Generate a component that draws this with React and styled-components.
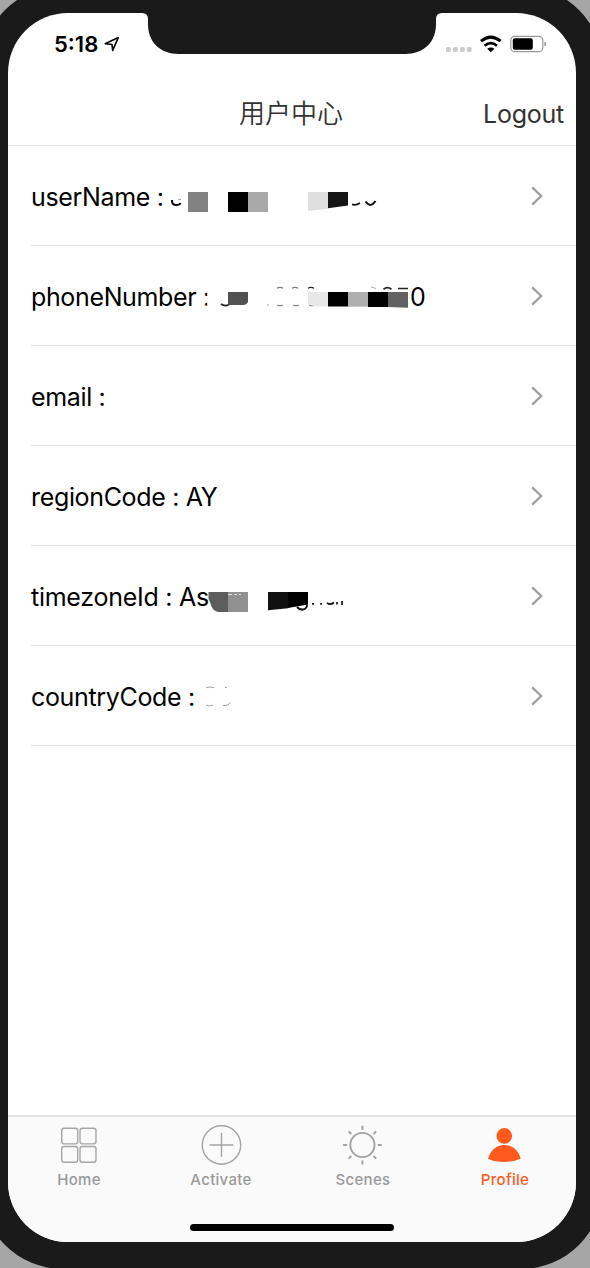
import React from 'react';
import styled, { createGlobalStyle } from 'styled-components';

const GlobalStyle = createGlobalStyle`
  * { box-sizing: border-box; }
  body { margin: 0; overflow: hidden; font-family: Inter, "Noto Sans CJK SC", sans-serif; }
  svg { display: block; }
`;

const Desktop = styled.div`
  width: 590px;
  height: 1268px;
  overflow: hidden;
  background: #a6a6a6;
`;

const Phone = styled.div`
  width: 622px;
  height: 1283px;
  margin: -14px 0 0 -19px;
  padding: 27px;
  border-radius: 82px;
  background: #1a1a1a;
`;

const Screen = styled.main`
  position: relative;
  width: 568px;
  height: 1229px;
  display: flex;
  flex-direction: column;
  overflow: hidden;
  border-radius: 60px;
  background: #fff;
`;

const Notch = styled.svg`
  position: absolute;
  top: 0;
  left: 132px;
`;

const StatusBar = styled.div`
  height: 67px;
  padding: 19px 29px 0 46px;
  display: flex;
  align-items: flex-start;
  justify-content: space-between;
`;

const Clock = styled.div`
  display: flex;
  align-items: center;
  gap: 6px;
  height: 24px;
  font-size: 22px;
  line-height: 24px;
  font-weight: 600;
  color: #000;
`;

const Header = styled.header`
  height: 66px;
  padding: 2px 12px 0;
  display: grid;
  grid-template-columns: 1fr auto 1fr;
  align-items: center;
  border-bottom: 1px solid #e8e8e8;
  color: #333;
`;

const Title = styled.h1`
  grid-column: 2;
  margin: -3px 0 0 -2px;
  font-size: 26px;
  line-height: 36px;
  font-weight: 350;
  font-family: "Noto Sans CJK SC DemiLight", "Noto Sans CJK SC", sans-serif;
`;

const Logout = styled.button`
  justify-self: end;
  padding: 0;
  border: 0;
  background: none;
  font: 400 25px/36px Inter, sans-serif;
  letter-spacing: -0.25px;
  color: #333;
`;

const List = styled.ul`
  flex: 1;
  margin: 0;
  padding: 0 0 0 23px;
  list-style: none;
`;

const Row = styled.li`
  position: relative;
  height: 100px;
  padding: 2px 32px 0 0;
  display: flex;
  align-items: center;
  justify-content: space-between;
  border-bottom: 1px solid #e2e2e2;
`;

const RowText = styled.span`
  font-size: 25px;
  line-height: 36px;
  letter-spacing: ${(p) => p.$tracking || '-0.34px'};
  color: #000;
  white-space: pre;
`;

const Mask = styled.svg`
  position: absolute;
  left: 0;
  top: 0;
`;

const LastDigit = styled.span`
  position: absolute;
  left: 379px;
  top: 33px;
  font-size: 25px;
  line-height: 36px;
`;

const TabBar = styled.nav`
  height: 127px;
  display: grid;
  grid-template-columns: repeat(4, 1fr);
  align-items: start;
  border-top: 2px solid #e3e3e3;
  background: #fafafa;
`;

const Tab = styled.a`
  padding-top: 8px;
  display: flex;
  flex-direction: column;
  align-items: center;
  gap: 3px;
  font-size: 15px;
  line-height: 20px;
  font-weight: 500;
  letter-spacing: 0.3px;
  color: ${(p) => (p.$active ? '#ff5a1c' : '#999')};
`;

const HomeIndicator = styled.div`
  position: absolute;
  left: 182px;
  bottom: 11px;
  width: 204px;
  height: 7px;
  border-radius: 4px;
  background: #000;
`;

const Chevron = () => (
  <svg width="14" height="22" viewBox="0 0 14 22" fill="none" stroke="#a0a0a0" strokeWidth="2.3">
    <path d="M2.2 1.4 L11.2 10 L2.2 18.6" />
  </svg>
);

const StatusIcons = () => (
  <svg width="110" height="25" viewBox="437 32 110 25">
    <g fill="#cbcbcb">
      {[446, 453, 460, 466.8].map((x) => (
        <rect key={x} x={x} y="47" width="4.8" height="5" rx="1.5" />
      ))}
    </g>
    <g fill="none" stroke="#000">
      <path d="M481 41.2 Q490.8 33 500.6 41.2" strokeWidth="3" />
      <path d="M484.6 45.8 Q490.8 40.4 497 45.8" strokeWidth="2.8" />
    </g>
    <path d="M487.2 48.8 Q490.8 46 494.4 48.8 L490.8 52.2 Z" />
    <rect x="510.8" y="36.3" width="32" height="15.4" rx="4" fill="none" stroke="#999" strokeWidth="1.2" />
    <rect x="512.8" y="38.3" width="20" height="11.4" rx="2" />
    <path d="M544.4 41.5 Q546.3 42.3 546.3 44 Q546.3 45.7 544.4 46.5 Z" fill="#999" />
  </svg>
);

const icons = {
  Home: (
    <svg width="42" height="42" viewBox="0 0 42 42" fill="none" stroke="#a6a6a6" strokeWidth="1.4">
      {[[3.7, 3.2], [22, 3.2], [3.7, 21.5], [22, 21.5]].map(([x, y]) => (
        <rect key={`${x}-${y}`} x={x} y={y} width="16" height="15.7" rx="2.3" />
      ))}
    </svg>
  ),
  Activate: (
    <svg width="42" height="42" viewBox="0 0 42 42" fill="none" stroke="#a3a3a3" strokeWidth="1.4">
      <circle cx="21.5" cy="20" r="19.2" />
      <path d="M9.5 20h24M21.5 8v24" />
    </svg>
  ),
  Scenes: (
    <svg width="42" height="42" viewBox="0 0 42 42" fill="none" stroke="#a2a2a2" strokeWidth="2" strokeLinecap="round">
      <circle cx="20.4" cy="20" r="12.1" strokeWidth="1.9" />
      <path d="M20.4 1.5v2.4M20.4 36.3v2.4M1.8 20h2.6M36.4 20h2.6M7.2 6.9l1.5 1.6M33.6 6.9l-1.5 1.6M7.2 33.1l1.5-1.6M33.6 33.1l-1.5-1.6" />
    </svg>
  ),
  Profile: (
    <svg width="42" height="42" viewBox="0 0 42 42" fill="#ff5a1c">
      <circle cx="20.3" cy="10.9" r="7.8" />
      <path d="M4 33.7 C6.4 25.1 12.5 19.9 20.3 19.9 C28.1 19.9 34.2 25.1 36.7 33.7 Q29.2 36.9 20.3 36.9 Q11.5 36.9 4 33.7 Z" />
    </svg>
  ),
};

// Mosaic blocks that cover private values; x follows the screen, y the row.
const Mosaic = ({ children }) => (
  <Mask width="545" height="99" viewBox="31 0 545 99">
    {children}
  </Mask>
);

const masks = {
  userName: (
    <Mosaic>
      <g fill="none" stroke="#111" strokeWidth="2">
        <path d="M172 54 Q171.5 58.5 175.5 59 Q179.5 59.5 180.5 57" />
        <path d="M178 53.3l3 .2" stroke="#666" strokeWidth=".6" />
        <path d="M352 58.4 Q356 59.6 360 57" strokeWidth="1.7" />
        <path d="M365.5 55.5 Q370.5 62.5 375.5 55" />
      </g>
      <rect x="188" y="46" width="20" height="20" fill="#828282" />
      <rect x="228" y="46" width="20" height="20" />
      <rect x="248" y="46" width="20" height="20" fill="#a8a8a8" />
      <path d="M308 46h20v16.8l-20 2.2z" fill="#dfdfdf" />
      <path d="M328 46h20v13.5l-20 2.8z" fill="#151515" />
    </Mosaic>
  ),
  phoneNumber: (
    <Mosaic>
      <rect x="207.2" y="36" width="5" height="28" fill="#fff" />
      <g fill="none" stroke="#222" strokeWidth="1.2">
        <path d="M221 58q4 3 8 .5" strokeWidth="1.8" />
        <path d="M277 42.2q3-1.6 6 0M292 42.2q3-1.6 6 0" stroke="#777" />
        <path d="M308 42.2q3-1.6 6 0" />
        <path d="M277 59.2q3 1 6 0M293 59.2q3 1 6 0M309 59.2q3 1 6 0M267 59h1.5" stroke="#888" />
        <path d="M371 41l5 1.5" stroke="#999" strokeWidth=".8" />
        <path d="M383.5 43.2q4-3 8 0M398 42.5h10" strokeWidth="1.7" />
      </g>
      <path d="M228 46h20v10q-1.5 3-5 3h-15z" fill="#525252" />
      <path d="M308 46h20v14.5h-12l-8-2z" fill="#e8e8e8" />
      <path d="M328 46h20v14.5h-20z" />
      <path d="M348 46h20v14.7h-20z" fill="#afafaf" />
      <path d="M368 46h20v15h-20z" />
      <path d="M388 46h20v15.7l-20-.7z" fill="#626262" />
    </Mosaic>
  ),
  timezoneId: (
    <Mosaic>
      <path d="M208.5 46H228v20h-10q-6-1-8-10l-1.5-3z" fill="#5d5d5d" />
      <rect x="228" y="46" width="20" height="20" fill="#919191" />
      <path d="M228 48.5h4M234 48.5h3M239 48.5h2" stroke="#eee" strokeWidth=".9" />
      <path d="M268 46h20v16.3l-20 2z" fill="#111" />
      <path d="M288 46h20v12.5l-20 3.4z" />
      <g fill="none" stroke="#111" strokeWidth="2">
        <path d="M297 61q4 4.3 8.4 1.5q1.8-1.2 1.6-4" />
        <path d="M312 57.8h2M321 57v1.7M327 56.8q3 2.8 7-.3M337 56v2.6M342 55v4" strokeWidth="1.7" />
      </g>
    </Mosaic>
  ),
  countryCode: (
    <Mosaic>
      <path d="M206 41.8q4-1.8 8 0M206 59.2q3.5 1.2 7 0M223 59.4q5 1 7.5-3M225 41.2l2 .5" fill="none" stroke="#888" strokeWidth=".8" />
    </Mosaic>
  ),
};

const rows = [
  { id: 'userName', text: 'userName :' },
  { id: 'phoneNumber', text: 'phoneNumber :', end: '0', tracking: '-0.36px' },
  { id: 'email', text: 'email :' },
  { id: 'regionCode', text: 'regionCode : AY' },
  { id: 'timezoneId', text: 'timezoneId : As', tracking: '-0.26px' },
  { id: 'countryCode', text: 'countryCode :' },
];

export default function App() {
  return (
    <Desktop>
      <GlobalStyle />
      <Phone>
        <Screen>
          <Notch width="304" height="42" viewBox="140 13 304 42">
            <path d="M140 12H444V13H442Q436 13 436 19V24C436 42 424 54 405 54H179C160 54 148 42 148 24V19Q148 13 142 13H140Z" fill="#1a1a1a" />
          </Notch>
          <StatusBar>
            <Clock>
              5:18
              <svg width="16" height="17" viewBox="0 0 16 17" fill="none" stroke="#000" strokeWidth="1.6" strokeLinejoin="round">
                <path d="M1.2 7.7 L14.3 1.6 L8.7 14.4 L8 8.5 Z" />
              </svg>
            </Clock>
            <StatusIcons />
          </StatusBar>
          <Header>
            <Title>用户中心</Title>
            <Logout>Logout</Logout>
          </Header>
          <List>
            {rows.map((row) => (
              <Row key={row.id}>
                <RowText $tracking={row.tracking}>{row.text}</RowText>
                {masks[row.id]}
                {row.end && <LastDigit>{row.end}</LastDigit>}
                <Chevron />
              </Row>
            ))}
          </List>
          <TabBar>
            {Object.keys(icons).map((name) => (
              <Tab key={name} $active={name === 'Profile'}>
                {icons[name]}
                {name}
              </Tab>
            ))}
          </TabBar>
          <HomeIndicator />
        </Screen>
      </Phone>
    </Desktop>
  );
}
